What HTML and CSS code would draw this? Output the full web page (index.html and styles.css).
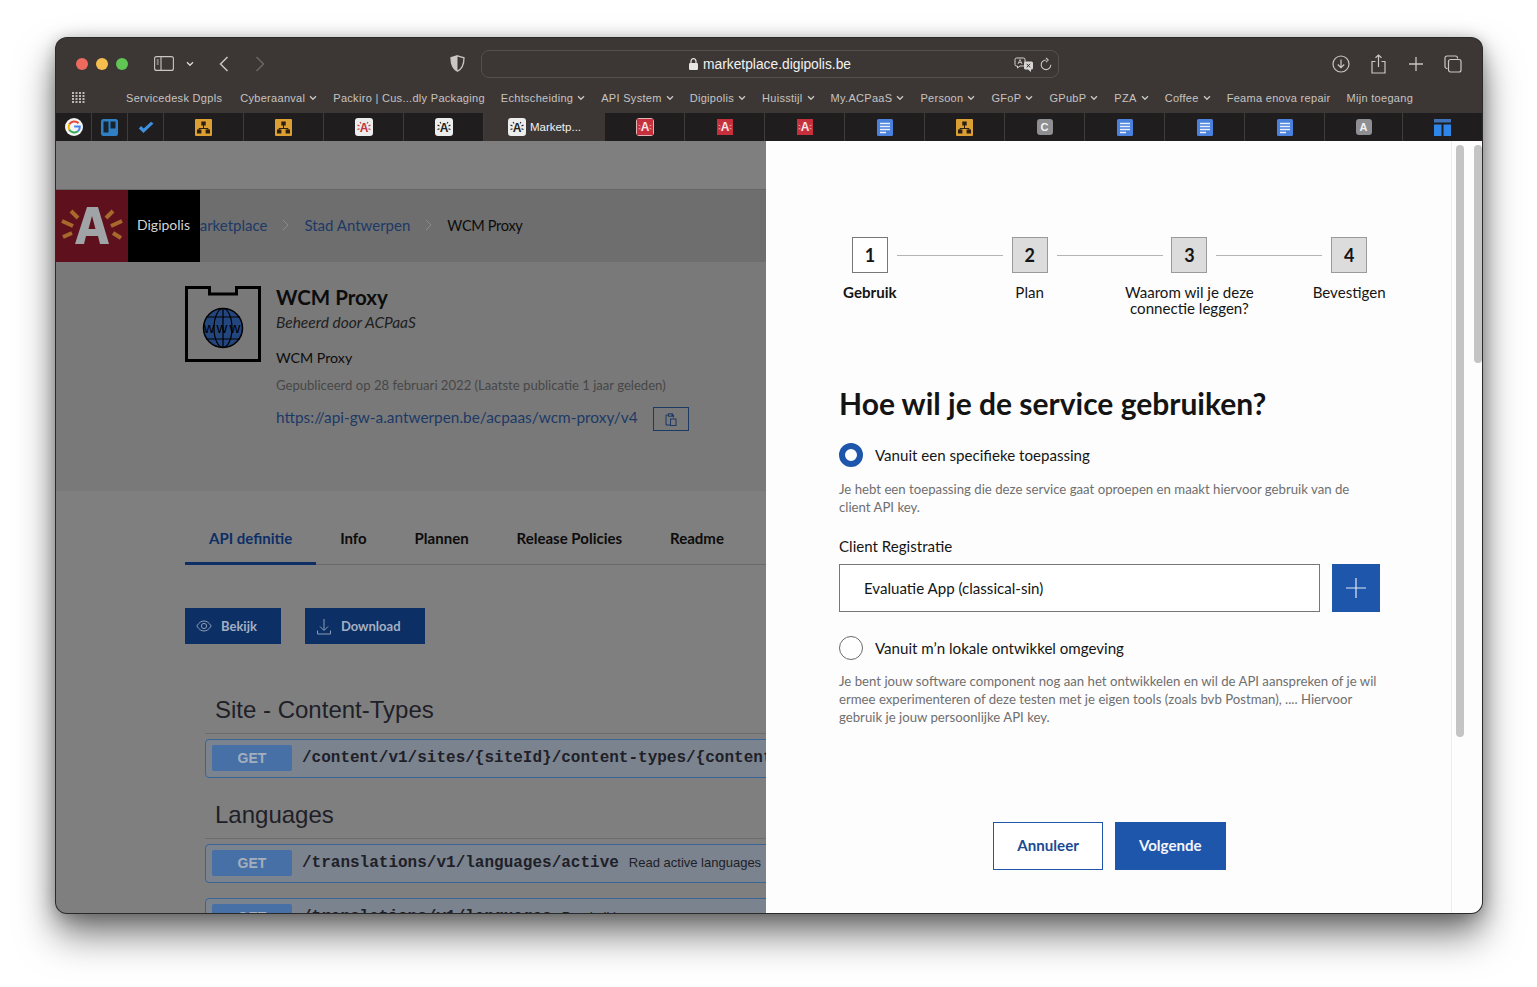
FILE: index.html
```html
<!DOCTYPE html>
<html lang="nl">

<head>
  <meta charset="UTF-8">
  <title>WCM Proxy - Marketplace</title>
  <link rel="stylesheet" href="styles.css">
</head>

<body>
  <svg class="sprite" width="0" height="0">
    <symbol id="chev" viewBox="0 0 8 6"><path d="M1 1.2 4 4.2 7 1.2" fill="none" stroke="currentColor" stroke-width="1.4"/></symbol>
    <symbol id="tree" viewBox="0 0 17 17"><rect width="17" height="17" rx="1" fill="#dc9f33"/><path d="M8.5 6v3M4 12V9.500h9V12" fill="none" stroke="#2a2114" stroke-width="1"/><rect x="6.300" y="2.500" width="4.400" height="4" fill="#2a2114"/><rect x="2" y="10.500" width="4.400" height="4" fill="#2a2114"/><rect x="10.600" y="10.500" width="4.400" height="4" fill="#2a2114"/></symbol>
    <symbol id="doc" viewBox="0 0 16 17"><rect width="16" height="17" rx="1.500" fill="#4a81dc"/><path d="M3 4.500h10M3 7.500h10M3 10.500h10M3 13.500h6" stroke="#e8eefa" stroke-width="1.400"/></symbol>
    <symbol id="burst" viewBox="0 0 18 18"><rect width="18" height="18" rx="3" fill="#ededed"/><path d="M2.500 7 4.500 8M2.500 11.500 4.500 10.700M15.500 7 13.500 8M15.500 11.500 13.500 10.700M5 4 6 5.500M13 4 12 5.500" stroke="currentColor" stroke-width="1.100"/></symbol>
    <symbol id="red" viewBox="0 0 16 16"><rect width="16" height="16" fill="#c5303c"/><path d="M1.500 6 3.500 7M1.500 10 3.500 9.300M14.500 6 12.500 7M14.500 10 12.500 9.300" stroke="#eca0a6" stroke-width="1"/></symbol>
  </svg>

  <div class="window">
    <header class="toolbar">
      <div class="lights"><i class="light red"></i><i class="light yellow"></i><i class="light green"></i></div>
      <svg class="tool-sidebar" width="20" height="15" viewBox="0 0 20 15" fill="none" stroke="#c9c6c4" stroke-width="1.100"><rect x=".6" y=".6" width="18.800" height="13.800" rx="2"/><path d="M7 .6v13.800M2.700 4h2M2.700 6h2M2.700 8h2"/></svg>
      <svg class="tool-chev" width="8" height="6"><use href="#chev"/></svg>
      <svg class="tool-back" width="10" height="16" viewBox="0 0 10 16" fill="none" stroke="#c9c6c4" stroke-width="1.500"><path d="M8.500 1 1.500 8l7 7"/></svg>
      <svg class="tool-forward" width="10" height="16" viewBox="0 0 10 16" fill="none" stroke="#6a6663" stroke-width="1.500"><path d="M1.500 1l7 7-7 7"/></svg>
      <svg class="tool-shield" width="15" height="17" viewBox="0 0 15 17"><path d="M7.500.8 14 2.800C14 9 12 14 7.500 16.200 3 14 1 9 1 2.800Z" fill="none" stroke="#c9c6c4" stroke-width="1.300"/><path d="M7.500.8V16.200C3 14 1 9 1 2.800Z" fill="#c9c6c4"/></svg>
      <div class="url-bar">
        <svg class="lock" width="9" height="12" viewBox="0 0 9 12"><rect y="5" width="9" height="7" rx="1.200" fill="#e8e6e5"/><path d="M2 5.500V3.200a2.500 2.500 0 0 1 5 0v2.300" fill="none" stroke="#e8e6e5" stroke-width="1.200"/></svg>
        <span class="url-text">marketplace.digipolis.be</span>
        <div class="url-tools">
          <svg width="20" height="15" viewBox="0 0 20 15"><path d="M2.500 1h7a1.500 1.500 0 0 1 1.500 1.500v5A1.500 1.500 0 0 1 9.500 9H6L3.500 11V9h-1A1.500 1.500 0 0 1 1 7.500v-5A1.500 1.500 0 0 1 2.500 1Z" fill="none" stroke="#d8d6d5"/><path d="M4 7l2-4.500L8 7M4.700 5.500h2.600" fill="none" stroke="#d8d6d5" stroke-width=".8"/><path d="M11 4.500h6.500A1.500 1.500 0 0 1 19 6v5a1.500 1.500 0 0 1-1.500 1.500H17V15l-3-2.500h-2.500A1.500 1.500 0 0 1 10 11V6Z" fill="#d8d6d5"/><path d="M12.700 6.800l3.400 3.600M16.100 6.800l-3.400 3.600" stroke="#3c3735" stroke-width="1"/></svg>
          <svg width="12" height="14" viewBox="0 0 12 14" fill="none" stroke="#c9c6c4" stroke-width="1.100"><path d="M6 3a4.800 4.800 0 1 0 4.800 4.800M6 .8 8.200 3 6 5.200"/></svg>
        </div>
      </div>
      <div class="tool-right">
        <svg width="18" height="18" viewBox="0 0 18 18" fill="none" stroke="#c9c6c4" stroke-width="1.200"><circle cx="9" cy="9" r="8"/><path d="M9 4.500v8M5.800 9.500 9 12.700l3.200-3.200"/></svg>
        <svg class="tool-share" width="15" height="20" viewBox="0 0 15 20" fill="none" stroke="#c9c6c4" stroke-width="1.200"><path d="M4.500 7.500H1v11.500h13V7.500h-3.500M7.500 13V1M4.500 3.800 7.500 1l3 2.800"/></svg>
        <svg width="14" height="14" viewBox="0 0 14 14" fill="none" stroke="#c9c6c4" stroke-width="1.300"><path d="M7 0v14M0 7h14"/></svg>
        <svg width="18" height="18" viewBox="0 0 18 18" fill="none" stroke="#c9c6c4" stroke-width="1.200"><path d="M3.500 13.500H3A2 2 0 0 1 1 11.500V3a2 2 0 0 1 2-2h8.500a2 2 0 0 1 2 2v.5"/><rect x="4.500" y="4.500" width="12.500" height="12.500" rx="2"/></svg>
      </div>
    </header>

    <nav class="bookmarks">
      <svg class="apps" width="13" height="11" viewBox="0 0 13 11" fill="#bdb9b6"><path d="M0 0h2v2H0zM3.500 0h2v2h-2zM7 0h2v2H7zM10.500 0h2v2h-2zM0 3h2v2H0zM3.500 3h2v2h-2zM7 3h2v2H7zM10.500 3h2v2h-2zM0 6h2v2H0zM3.500 6h2v2h-2zM7 6h2v2H7zM10.500 6h2v2h-2zM0 9h2v2H0zM3.500 9h2v2h-2zM7 9h2v2H7zM10.500 9h2v2h-2z"/></svg>
      <a class="bookmark first-mark">Servicedesk Dgpls</a>
      <a class="bookmark">Cyberaanval <svg width="8" height="6"><use href="#chev"/></svg></a>
      <a class="bookmark">Packiro | Cus...dly Packaging</a>
      <a class="bookmark">Echtscheiding <svg width="8" height="6"><use href="#chev"/></svg></a>
      <a class="bookmark">API System <svg width="8" height="6"><use href="#chev"/></svg></a>
      <a class="bookmark">Digipolis <svg width="8" height="6"><use href="#chev"/></svg></a>
      <a class="bookmark">Huisstijl <svg width="8" height="6"><use href="#chev"/></svg></a>
      <a class="bookmark">My.ACPaaS <svg width="8" height="6"><use href="#chev"/></svg></a>
      <a class="bookmark">Persoon <svg width="8" height="6"><use href="#chev"/></svg></a>
      <a class="bookmark">GFoP <svg width="8" height="6"><use href="#chev"/></svg></a>
      <a class="bookmark">GPubP <svg width="8" height="6"><use href="#chev"/></svg></a>
      <a class="bookmark">PZA <svg width="8" height="6"><use href="#chev"/></svg></a>
      <a class="bookmark">Coffee <svg width="8" height="6"><use href="#chev"/></svg></a>
      <a class="bookmark">Feama enova repair</a>
      <a class="bookmark">Mijn toegang</a>
    </nav>

    <div class="tabs">
      <div class="tab pinned">
        <svg width="18" height="18" viewBox="0 0 18 18"><circle cx="9" cy="9" r="9" fill="#f4f4f4"/><path d="M13.500 5.200A5.800 5.800 0 0 0 4.300 6.300" fill="none" stroke="#e5483a" stroke-width="2"/><path d="M4.300 6.300a5.800 5.800 0 0 0 0 5.400" fill="none" stroke="#f5b800" stroke-width="2"/><path d="M4.300 11.700a5.800 5.800 0 0 0 8.900 1.300" fill="none" stroke="#35a853" stroke-width="2"/><path d="M13.200 13A5.800 5.800 0 0 0 14.800 8.500H9.200" fill="none" stroke="#4285f4" stroke-width="2"/></svg>
      </div>
      <div class="tab pinned">
        <svg width="17" height="17" viewBox="0 0 17 17"><rect width="17" height="17" rx="2.500" fill="#2f7fc4"/><rect x="2.500" y="2.500" width="5" height="11" fill="#17242f"/><rect x="9.500" y="2.500" width="5" height="7" fill="#17242f"/></svg>
      </div>
      <div class="tab pinned">
        <svg width="16" height="13" viewBox="0 0 16 13"><path d="M.8 7.500 5.500 12 15.500 2.500 13 .8 5.700 7.500 3 5Z" fill="#3e8fe0"/></svg>
      </div>
      <div class="tab"><svg width="17" height="17"><use href="#tree"/></svg></div>
      <div class="tab"><svg width="17" height="17"><use href="#tree"/></svg></div>
      <div class="tab"><svg class="burst-red" width="18" height="18"><use href="#burst"/><text class="fav-a" x="9" y="13.500">A</text></svg></div>
      <div class="tab"><svg class="burst-dark" width="18" height="18"><use href="#burst"/><text class="fav-a" x="9" y="13.500">A</text></svg></div>
      <div class="tab active"><svg class="burst-dark" width="18" height="18"><use href="#burst"/><text class="fav-a" x="9" y="13.500">A</text></svg><span>Marketp...</span></div>
      <div class="tab"><span class="red-frame"><svg class="red-a" width="16" height="16"><use href="#red"/><text class="fav-a" x="8" y="12.300">A</text></svg></span></div>
      <div class="tab"><svg class="red-a" width="16" height="16"><use href="#red"/><text class="fav-a" x="8" y="12.300">A</text></svg></div>
      <div class="tab"><svg class="red-a" width="16" height="16"><use href="#red"/><text class="fav-a" x="8" y="12.300">A</text></svg></div>
      <div class="tab"><svg width="16" height="17"><use href="#doc"/></svg></div>
      <div class="tab"><svg width="17" height="17"><use href="#tree"/></svg></div>
      <div class="tab"><span class="letter">C</span></div>
      <div class="tab"><svg width="16" height="17"><use href="#doc"/></svg></div>
      <div class="tab"><svg width="16" height="17"><use href="#doc"/></svg></div>
      <div class="tab"><svg width="16" height="17"><use href="#doc"/></svg></div>
      <div class="tab tab-narrow"><span class="letter">A</span></div>
      <div class="tab last">
        <svg width="17" height="17" viewBox="0 0 17 17"><rect width="17" height="3.500" fill="#3f72b8"/><rect y="5.500" width="7.500" height="11.500" fill="#2e86e8"/><rect x="9.500" y="5.500" width="7.500" height="11.500" fill="#2e86e8"/></svg>
      </div>
    </div>

    <main class="content">
      <section class="page">
        <div class="page-top"></div>
        <div class="crumbs">
          <a class="crumb-link">Marketplace</a>
          <svg class="crumb-sep" width="7" height="12" viewBox="0 0 7 12" fill="none" stroke="#8b8b8b"><path d="M1 1l5 5-5 5"/></svg>
          <a class="crumb-link">Stad Antwerpen</a>
          <svg class="crumb-sep" width="7" height="12" viewBox="0 0 7 12" fill="none" stroke="#8b8b8b"><path d="M1 1l5 5-5 5"/></svg>
          <span class="crumb-current">WCM Proxy</span>
        </div>
        <div class="brand">
          <div class="brand-logo">
            <svg width="72" height="72" viewBox="0 0 72 72">
              <path d="M15 21l7 7M6 31l11 5M7 47l9-4M57 21l-7 7M66 31l-11 5M65 48l-8-5" stroke="#a86a2c" stroke-width="4"/>
              <path d="M19 54 31 17H42L53 54H44L42 46H30L28 54ZM32.500 39H39.500L36 26Z" fill="#a1a4a6" fill-rule="evenodd"/>
            </svg>
          </div>
          <div class="brand-name">Digipolis</div>
        </div>

        <div class="hero">
          <div class="hero-icon">
            <svg width="76" height="76" viewBox="0 0 76 76">
              <path d="M1.500 1.500H24.500V8H51.500V1.500H74.500V74.500H1.500Z" fill="none" stroke="#000" stroke-width="3"/>
              <circle cx="38" cy="42" r="19.500" fill="#24467f" stroke="#000" stroke-width="1.500"/>
              <ellipse cx="38" cy="42" rx="9" ry="19.500" fill="none" stroke="#000" stroke-width="1.200"/>
              <path d="M38 22v40M21 31h34M21 53h34" stroke="#000" stroke-width="1.200"/>
              <text class="globe-text" x="38" y="47">www</text>
            </svg>
          </div>
          <div class="hero-text">
            <h1 class="hero-title">WCM Proxy</h1>
            <p class="hero-owner">Beheerd door ACPaaS</p>
            <p class="hero-name">WCM Proxy</p>
            <p class="hero-date">Gepubliceerd op 28 februari 2022 (Laatste publicatie 1 jaar geleden)</p>
            <div class="hero-url">
              <a class="crumb-link">https://api-gw-a.antwerpen.be/acpaas/wcm-proxy/v4</a>
              <span class="copy-btn">
                <svg width="12" height="13" viewBox="0 0 12 13" fill="none" stroke="#1d3966"><path d="M3.500 2H1v10h4M8.500 4.500V2H6"/><rect x="3.500" y=".8" width="4" height="2.400"/><rect x="5.500" y="6" width="5.500" height="6.500"/></svg>
              </span>
            </div>
          </div>
        </div>

        <div class="page-tabs">
          <a class="page-tab current">API definitie</a>
          <a class="page-tab">Info</a>
          <a class="page-tab">Plannen</a>
          <a class="page-tab">Release Policies</a>
          <a class="page-tab">Readme</a>
        </div>

        <div class="actions">
          <a class="action">
            <svg width="16" height="12" viewBox="0 0 16 12" fill="none" stroke="#8d9cb3"><path d="M.8 6C3 2.500 5.300 1 8 1s5 1.500 7.200 5C13 9.500 10.700 11 8 11S3 9.500.8 6Z"/><circle cx="8" cy="6" r="2.600"/></svg>
            Bekijk
          </a>
          <a class="action">
            <svg width="16" height="17" viewBox="0 0 15 17" fill="none" stroke="#8d9cb3"><path d="M7.500 1v11M3.500 8.500l4 4 4-4M1 12.500V16h13v-3.500"/></svg>
            Download
          </a>
        </div>

        <div class="swagger">
          <h2 class="api-group">Site - Content-Types</h2>
          <div class="opblock">
            <span class="method">GET</span>
            <span class="op-path">/content/v1/sites/{siteId}/content-types/{contentTypeId}</span>
          </div>
          <h2 class="api-group">Languages</h2>
          <div class="opblock">
            <span class="method">GET</span>
            <span class="op-path">/translations/v1/languages/active</span>
            <span class="op-desc">Read active languages</span>
          </div>
          <div class="opblock">
            <span class="method">GET</span>
            <span class="op-path">/translations/v1/languages</span>
            <span class="op-desc">Read all languages</span>
          </div>
        </div>
      </section>

      <section class="panel">
        <div class="panel-body">
          <ol class="steps">
            <li class="step current"><span class="step-num">1</span><span class="step-label">Gebruik</span></li>
            <li class="step"><span class="step-num">2</span><span class="step-label">Plan</span></li>
            <li class="step"><span class="step-num">3</span><span class="step-label">Waarom wil je deze connectie leggen?</span></li>
            <li class="step"><span class="step-num">4</span><span class="step-label">Bevestigen</span></li>
          </ol>

          <form class="usage">
            <h2 class="usage-title">Hoe wil je de service gebruiken?</h2>
            <div class="radio-row"><span class="radio checked"></span>Vanuit een specifieke toepassing</div>
            <p class="help">Je hebt een toepassing die deze service gaat oproepen en maakt hiervoor gebruik van de client API key.</p>
            <div class="field-label">Client Registratie</div>
            <div class="field-row">
              <div class="field">Evaluatie App (classical-sin)</div>
              <span class="add-btn">
                <svg width="20" height="20" viewBox="0 0 20 20" stroke="#dfe8f5" stroke-width="1.200"><path d="M10 0v20M0 10h20"/></svg>
              </span>
            </div>
            <div class="radio-row second"><span class="radio"></span>Vanuit m’n lokale ontwikkel omgeving</div>
            <p class="help">Je bent jouw software component nog aan het ontwikkelen en wil de API aanspreken of je wil ermee experimenteren of deze testen met je eigen tools (zoals bvb Postman), .... Hiervoor gebruik je jouw persoonlijke API key.</p>
            <div class="form-buttons">
              <a class="btn btn-outline">Annuleer</a>
              <a class="btn btn-solid">Volgende</a>
            </div>
          </form>
        </div>
        <div class="scroll-gutter">
          <div class="scroll-track"><i class="thumb thumb-long"></i></div>
          <div class="scroll-track"><i class="thumb thumb-short"></i></div>
        </div>
      </section>
    </main>
  </div>
</body>

</html>
```

FILE: styles.css
```css
* {
  box-sizing: border-box;
}

html,
body {
  height: 100%;
  overflow: hidden;
}

body {
  margin: 0;
  padding: 38px 55px 0 56px;
  background: #fff;
  font-family: Lato, "Noto Sans", sans-serif;
}

.sprite {
  position: absolute;
}

.window {
  height: 875px;
  display: flex;
  flex-direction: column;
  border-radius: 11px;
  overflow: hidden;
  background: #3c3735;
  box-shadow: 0 0 0 1px #2b2a2a, 0 22px 38px rgba(0, 0, 0, 0.5), 0 6px 22px rgba(0, 0, 0, 0.25), 0 0 14px rgba(0, 0, 0, 0.12);
}

/* browser chrome */
.toolbar {
  height: 46px;
  flex: none;
  display: flex;
  align-items: center;
  padding: 5px 20px 0 20px;
  background: #3c3735;
}

.lights {
  display: flex;
  gap: 8px;
  margin-right: 26px;
}

.light {
  width: 12px;
  height: 12px;
  border-radius: 50%;
}

.light.red {
  background: #ed6a5e;
}

.light.yellow {
  background: #f4bf4f;
}

.light.green {
  background: #61c554;
}

.tool-chev {
  margin-left: 12px;
  color: #d8d6d5;
}

.tool-back {
  margin-left: 25px;
}

.tool-forward {
  margin-left: 26px;
}

.tool-shield {
  margin-left: 185px;
}

.url-bar {
  width: 578px;
  height: 28px;
  margin-left: 16px;
  display: flex;
  align-items: center;
  justify-content: center;
  gap: 5px;
  border: 1px solid #54504d;
  border-radius: 8px;
  position: relative;
}

.url-text {
  padding-top: 1px;
  font-family: "Liberation Sans", sans-serif;
  font-size: 13.800px;
  color: #f2f1f0;
}

.url-tools {
  position: absolute;
  right: 6px;
  top: 6px;
  display: flex;
  align-items: center;
  gap: 6px;
}

.tool-right {
  margin-left: auto;
  display: flex;
  align-items: center;
  gap: 21px;
}

.tool-share {
  margin-right: 2px;
}

.bookmarks {
  height: 29px;
  flex: none;
  display: flex;
  align-items: center;
  gap: 16px;
  padding: 0 0 2px 16px;
  font-family: "Liberation Sans", sans-serif;
  font-size: 11px;
  letter-spacing: 0.3px;
  color: #c6c3c1;
  white-space: nowrap;
}

.apps {
  margin-right: 25px;
}

.bookmark {
  display: flex;
  align-items: center;
  gap: 4px;
}

.first-mark {
  padding-right: 2px;
}

.tabs {
  height: 28px;
  flex: none;
  display: flex;
  background: #1f1d1d;
}

.tab {
  width: 80px;
  flex: none;
  display: flex;
  align-items: center;
  justify-content: center;
  gap: 4px;
  border-right: 1px solid #3f3d3c;
}

.tab.pinned {
  width: 36px;
}

.tab.active {
  width: 121px;
  background: #3c3735;
  border-right: 0;
  font-family: "Liberation Sans", sans-serif;
  font-size: 11.500px;
  color: #f2f1f0;
}

.tab.tab-narrow {
  width: 78px;
}

.tab.last {
  flex: 1;
  border-right: 0;
}

.fav-a {
  font: 700 12px "Liberation Sans", sans-serif;
  text-anchor: middle;
  fill: currentColor;
}

.burst-red {
  color: #c5303c;
}

.burst-dark {
  color: #222;
}

.red-a {
  color: #f6e4e5;
}

.red-frame {
  width: 18px;
  height: 18px;
  display: flex;
  align-items: center;
  justify-content: center;
  background: #c5303c;
  border: 1px solid #e0b4b8;
  border-radius: 3px;
}

.letter {
  width: 16px;
  height: 16px;
  display: flex;
  align-items: center;
  justify-content: center;
  border-radius: 3px;
  background: #8e8e93;
  color: #f2f2f2;
  font: 700 11px "Liberation Sans", sans-serif;
}

/* main area */
.content {
  flex: 1;
  min-height: 0;
  display: flex;
}

.page {
  width: 710px;
  flex: none;
  position: relative;
  overflow: hidden;
  background: #7f7f7f;
  color: #0c0c0c;
}

.page-top {
  height: 49px;
  border-bottom: 1px solid #666;
}

.crumbs {
  height: 72px;
  display: flex;
  align-items: center;
  gap: 15px;
  padding: 0 0 2px 130px;
  background: #6e6e6e;
  font-size: 15px;
}

.crumb-link {
  color: #1d3966;
}

.crumb-current {
  font-size: 14.500px;
  letter-spacing: -0.3px;
}

.brand {
  position: absolute;
  left: 0;
  top: 49px;
  display: flex;
  height: 72px;
}

.brand-logo {
  width: 72px;
  background: #5e111c;
}

.brand-name {
  width: 72px;
  padding: 26px 0 0 9px;
  background: #000;
  color: #d5d5d5;
  font-size: 14px;
}

.hero {
  height: 229px;
  display: flex;
  gap: 15px;
  padding: 24px 0 0 129px;
  background: #797979;
}

.hero-icon {
  flex: none;
  height: 76px;
}

.globe-text {
  font: 400 15px "Liberation Sans", sans-serif;
  letter-spacing: 2px;
  text-anchor: middle;
  fill: #000;
}

.hero-text {
  margin-top: -2px;
}

.hero-title {
  margin: 0;
  font-size: 20.500px;
  line-height: 26px;
  font-weight: 700;
}

.hero-owner {
  margin: 0;
  padding-top: 1px;
  font-size: 15.500px;
  line-height: 23px;
  font-style: italic;
  color: #202020;
}

.hero-name {
  margin: 0;
  padding-top: 12px;
  font-size: 14.200px;
  line-height: 23px;
}

.hero-date {
  margin: 0;
  padding-top: 6px;
  font-size: 13.100px;
  line-height: 20px;
  color: #474747;
}

.hero-url {
  display: flex;
  align-items: center;
  gap: 15px;
  padding-top: 12px;
  font-size: 15.400px;
}

.hero-url a {
  margin-bottom: 4px;
}

.copy-btn {
  width: 36px;
  height: 24px;
  display: flex;
  align-items: center;
  justify-content: center;
  border: 1.500px solid #1d3966;
}

.page-tabs {
  height: 74px;
  display: flex;
  align-items: flex-end;
  margin-left: 129px;
  border-bottom: 1px solid #6a6a6a;
}

.page-tab {
  height: 47px;
  padding: 0 24px;
  line-height: 42px;
  font-size: 15px;
  font-weight: 700;
  color: #0c0c0c;
}

.page-tab.current {
  margin-bottom: -1px;
  height: 48px;
  border-bottom: 3px solid #0d2f66;
  color: #0d2f66;
}

.actions {
  display: flex;
  gap: 24px;
  padding: 43px 0 0 129px;
}

.action {
  height: 36px;
  display: flex;
  align-items: center;
  gap: 9px;
  padding: 0 24px 0 11px;
  background: #0c2f66;
  color: #a4afc1;
  font-size: 13px;
  font-weight: 700;
}

.swagger {
  padding: 29px 0 0 149px;
  width: 740px;
}

.api-group {
  margin: 21px 0 0;
  height: 40px;
  padding-left: 10px;
  border-bottom: 1px solid #6c6c6c;
  font: 400 24px/32px "Liberation Sans", sans-serif;
  color: #1e2028;
}

.opblock {
  height: 39px;
  margin: 5px 0 15px;
  display: flex;
  align-items: center;
  padding: 0 0 2px 6px;
  border: 1px solid #3a6596;
  border-radius: 4px;
  background: #7b838e;
  white-space: nowrap;
  overflow: hidden;
}

.opblock + .opblock {
  margin-top: 0;
}

.method {
  width: 80px;
  height: 26px;
  flex: none;
  border-radius: 2px;
  background: #4670a6;
  color: #a3afbd;
  font: 700 14px/26px "Liberation Sans", sans-serif;
  text-align: center;
}

.op-path {
  margin-left: 10px;
  font: 700 16px "Liberation Mono", monospace;
  color: #1e2028;
}

.op-desc {
  margin-left: 10px;
  font: 400 13px "Liberation Sans", sans-serif;
  color: #1e2028;
}

.panel {
  flex: 1;
  min-width: 0;
  display: flex;
  background: #fdfdfd;
  color: #151515;
}

.panel-body {
  width: 686px;
  flex: none;
  padding: 96px 22px 0 24px;
  border-right: 1px solid #ececec;
}

.steps {
  list-style: none;
  margin: 0;
  padding: 0;
  display: grid;
  grid-template-columns: repeat(4, 1fr);
  height: 118px;
}

.step {
  position: relative;
  display: flex;
  flex-direction: column;
  align-items: center;
  text-align: center;
  font-size: 15.100px;
  line-height: 16px;
}

.step:not(:last-child)::after {
  content: "";
  position: absolute;
  top: 18px;
  left: calc(50% + 27px);
  width: 106px;
  height: 1px;
  background: #b5b5b5;
}

.step-num {
  width: 36px;
  height: 36px;
  margin-bottom: 11px;
  background: #dcdcdc;
  border: 1px solid #9a9a9a;
  font-weight: 700;
  font-size: 18px;
  line-height: 34px;
}

.step.current .step-num {
  background: #fff;
  border-color: #777;
}

.step.current .step-label {
  font-weight: 700;
}

.step-label {
  width: 140px;
}

.usage {
  padding: 0 49px;
}

.usage-title {
  margin: 27px 0 0;
  font-size: 30px;
  line-height: 42px;
  font-weight: 700;
  color: #141414;
}

.radio-row {
  display: flex;
  align-items: center;
  gap: 12px;
  height: 24px;
  margin-top: 19px;
  font-size: 15.100px;
}

.radio-row.second {
  margin-top: 24px;
}

.radio {
  width: 24px;
  height: 24px;
  flex: none;
  border-radius: 50%;
  border: 1px solid #6a6a6a;
  background: #fff;
}

.radio.checked {
  border: 6px solid #1e56ab;
}

.help {
  margin: 13px 0 0;
  font-size: 13.200px;
  line-height: 18px;
  color: #6f6f6f;
}

.radio-row.second + .help {
  margin-top: 12px;
}

.field-label {
  margin-top: 20px;
  font-size: 15.100px;
  line-height: 20px;
}

.field-row {
  display: flex;
  gap: 12px;
  margin-top: 8px;
}

.field {
  flex: 1;
  height: 48px;
  padding-left: 24px;
  border: 1px solid #777;
  background: #fff;
  font-size: 15.100px;
  line-height: 46px;
}

.add-btn {
  width: 48px;
  height: 48px;
  display: flex;
  align-items: center;
  justify-content: center;
  background: #1e56ab;
}

.form-buttons {
  display: flex;
  justify-content: center;
  gap: 12px;
  margin-top: 96px;
}

.btn {
  height: 48px;
  padding: 0 23px;
  border: 1px solid #1e56ab;
  font-size: 15.100px;
  font-weight: 700;
  line-height: 44px;
}

.btn-outline {
  background: #fff;
  color: #1b4a94;
}

.btn-solid {
  background: #1e56ab;
  color: #f2f5fa;
}

.scroll-gutter {
  flex: 1;
  display: flex;
  gap: 10px;
  padding: 4px 0 0 4px;
}

.scroll-track {
  width: 8px;
}

.thumb {
  display: block;
  width: 8px;
  border-radius: 4px;
  background: #c4c4c4;
}

.thumb-long {
  height: 592px;
}

.thumb-short {
  height: 218px;
}
```
